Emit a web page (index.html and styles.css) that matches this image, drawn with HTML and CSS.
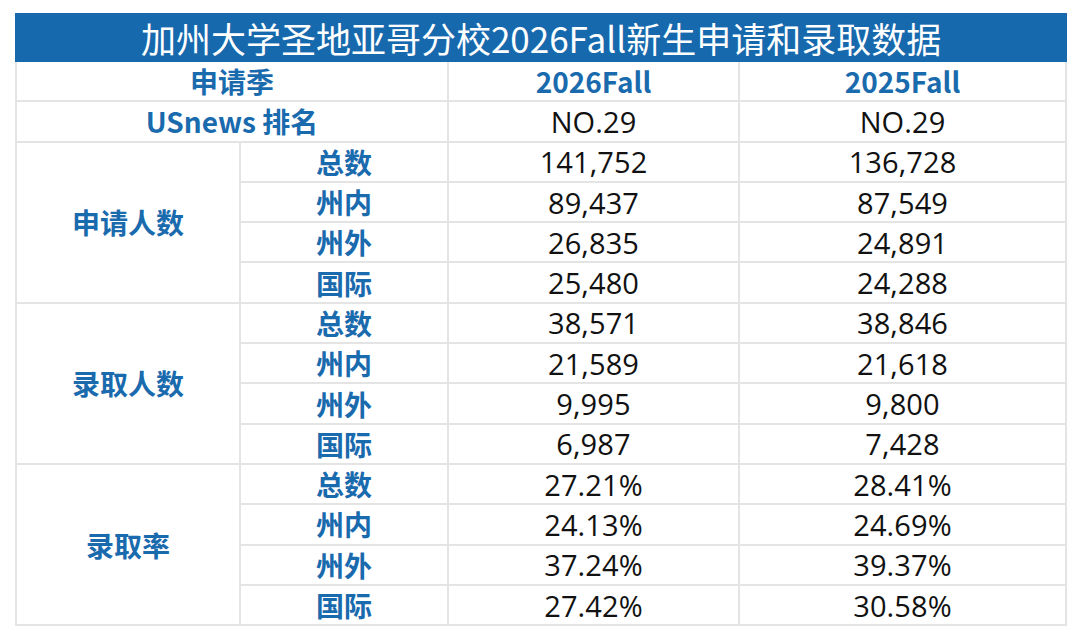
FILE: index.html
```html
<!DOCTYPE html>
<html lang="zh">
<head>
<meta charset="utf-8">
<link rel="stylesheet" href="styles.css">
</head>
<body>
<table class="data">
  <colgroup>
    <col class="c-group"><col class="c-sub"><col class="c-val"><col class="c-val2">
  </colgroup>
  <thead>
    <tr><th class="title" colspan="4">加州大学圣地亚哥分校2026Fall新生申请和录取数据</th></tr>
  </thead>
  <tbody>
    <tr><th class="lbl" colspan="2">申请季</th><th class="lbl">2026Fall</th><th class="lbl">2025Fall</th></tr>
    <tr><th class="lbl" colspan="2">USnews 排名</th><td>NO.29</td><td>NO.29</td></tr>

    <tr><th class="lbl" rowspan="4">申请人数</th><th class="lbl">总数</th><td>141,752</td><td>136,728</td></tr>
    <tr><th class="lbl">州内</th><td>89,437</td><td>87,549</td></tr>
    <tr><th class="lbl">州外</th><td>26,835</td><td>24,891</td></tr>
    <tr><th class="lbl">国际</th><td>25,480</td><td>24,288</td></tr>

    <tr><th class="lbl" rowspan="4">录取人数</th><th class="lbl">总数</th><td>38,571</td><td>38,846</td></tr>
    <tr><th class="lbl">州内</th><td>21,589</td><td>21,618</td></tr>
    <tr><th class="lbl">州外</th><td>9,995</td><td>9,800</td></tr>
    <tr><th class="lbl">国际</th><td>6,987</td><td>7,428</td></tr>

    <tr><th class="lbl" rowspan="4">录取率</th><th class="lbl">总数</th><td>27.21%</td><td>28.41%</td></tr>
    <tr><th class="lbl">州内</th><td>24.13%</td><td>24.69%</td></tr>
    <tr><th class="lbl">州外</th><td>37.24%</td><td>39.37%</td></tr>
    <tr><th class="lbl">国际</th><td>27.42%</td><td>30.58%</td></tr>
  </tbody>
</table>
</body>
</html>
```
FILE: styles.css
```css
html, body {
  margin: 0;
  padding: 0;
  background: #ffffff;
}

.data {
  margin: 13px 0 0 15px;
  width: 1050px;
  border-collapse: collapse;
  table-layout: fixed;
  font-family: "Open Sans", "Noto Sans CJK SC", sans-serif;
}

.c-group { width: 224px; }
.c-sub { width: 208px; }
.c-val { width: 291px; }
.c-val2 { width: 327px; }

.data th,
.data td {
  border: 2px solid #e4e4e4;
  height: 38.3px;
  padding: 0;
  text-align: center;
  vertical-align: middle;
  line-height: 1;
}

.data .title {
  background: #1769ae;
  color: #ffffff;
  font-family: "Noto Sans CJK SC", sans-serif;
  font-weight: 400;
  font-size: 35px;
  height: 45px;
  border: 2px solid #1769ae;
}

.data .lbl {
  color: #1a6aae;
  font-family: "Noto Sans CJK SC", sans-serif;
  font-weight: 700;
  font-size: 28px;
}

.data td {
  color: #111111;
  font-size: 29px;
  letter-spacing: 0.1px;
  font-weight: 400;
}
```
